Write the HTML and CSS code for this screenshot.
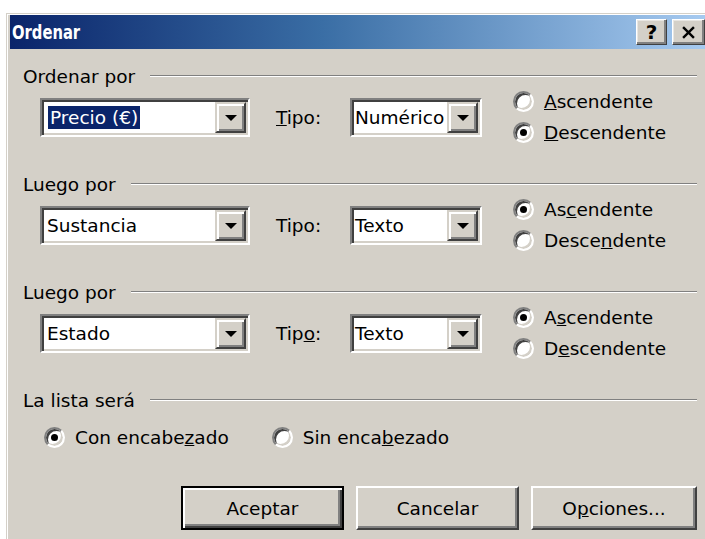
FILE: index.html
```html
<!DOCTYPE html>
<html lang="es">
<head>
<meta charset="utf-8">
<title>Ordenar</title>
<link rel="stylesheet" href="styles.css">
</head>
<body>
<div class="dialog">
  <div class="titlebar">
    <span class="title">Ordenar</span>
    <div class="caption">
      <span class="capbtn help">?</span>
      <span class="capbtn close"><svg viewBox="0 0 12 12" width="13" height="13"><path d="M1 1 L11 11 M11 1 L1 11" stroke="#000" stroke-width="2.2" fill="none"/></svg></span>
    </div>
  </div>

  <div class="content">
    <section class="group">
      <div class="legend"><span>Ordenar por</span><span class="rule"></span></div>
      <div class="sortrow">
        <div class="combo field"><span class="value sel">Precio (€)</span><span class="drop"><i class="arrow"></i></span></div>
        <span class="tipo"><u>T</u>ipo:</span>
        <div class="combo type"><span class="value">Numérico</span><span class="drop"><i class="arrow"></i></span></div>
        <div class="radios">
          <div class="radio"><span class="circle"></span><span><u>A</u>scendente</span></div>
          <div class="radio"><span class="circle on"></span><span><u>D</u>escendente</span></div>
        </div>
      </div>
    </section>

    <section class="group">
      <div class="legend"><span>Luego por</span><span class="rule"></span></div>
      <div class="sortrow">
        <div class="combo field"><span class="value">Sustancia</span><span class="drop"><i class="arrow"></i></span></div>
        <span class="tipo">Tipo:</span>
        <div class="combo type"><span class="value">Texto</span><span class="drop"><i class="arrow"></i></span></div>
        <div class="radios">
          <div class="radio"><span class="circle on"></span><span>As<u>c</u>endente</span></div>
          <div class="radio"><span class="circle"></span><span>Desce<u>n</u>dente</span></div>
        </div>
      </div>
    </section>

    <section class="group">
      <div class="legend"><span>Luego por</span><span class="rule"></span></div>
      <div class="sortrow">
        <div class="combo field"><span class="value">Estado</span><span class="drop"><i class="arrow"></i></span></div>
        <span class="tipo">Tip<u>o</u>:</span>
        <div class="combo type"><span class="value">Texto</span><span class="drop"><i class="arrow"></i></span></div>
        <div class="radios">
          <div class="radio"><span class="circle on"></span><span>A<u>s</u>cendente</span></div>
          <div class="radio"><span class="circle"></span><span>D<u>e</u>scendente</span></div>
        </div>
      </div>
    </section>

    <section class="group last">
      <div class="legend"><span>La lista será</span><span class="rule"></span></div>
      <div class="listrow">
        <div class="radio"><span class="circle on"></span><span>Con encabe<u>z</u>ado</span></div>
        <div class="radio"><span class="circle"></span><span>Sin enca<u>b</u>ezado</span></div>
      </div>
    </section>

    <div class="buttons">
      <span class="btn default">Aceptar</span>
      <span class="btn">Cancelar</span>
      <span class="btn wide">O<u>p</u>ciones...</span>
    </div>
  </div>
</div>
</body>
</html>
```

FILE: styles.css
```css
* { box-sizing: border-box; }

html, body {
  margin: 0;
  background: #fff;
}

body {
  width: 705px;
  height: 539px;
  overflow: hidden;
  font-family: "DejaVu Sans", "Liberation Sans", sans-serif;
  font-size: 18.5px;
  color: #000;
}

/* window frame */
.dialog {
  margin: 13px 0 0 6px;
  width: 699px;
  height: 540px;
  background: #d4d0c8;
  border-top: 1px solid #d4d0c8;
  border-left: 1px solid #d4d0c8;
  padding: 1px 0 0 3px;
  box-shadow: inset 1px 1px 0 #fff;
}

.titlebar {
  height: 34px;
  display: flex;
  align-items: center;
  justify-content: space-between;
  padding-left: 2px;
  background: linear-gradient(to right, #0a246a 0%, #3a6ea5 45%, #a6caf0 100%);
}

.title {
  color: #fff;
  font-family: "DejaVu Sans Condensed", "DejaVu Sans", sans-serif;
  font-weight: bold;
  font-size: 20px;
  transform: scaleX(0.82);
  transform-origin: left center;
}

.caption {
  display: flex;
  gap: 5px;
}

.capbtn {
  width: 31px;
  height: 26px;
  display: flex;
  align-items: center;
  justify-content: center;
  background: #d4d0c8;
  border: 1px solid;
  border-color: #fff #404040 #404040 #fff;
  box-shadow: inset -2px -2px 0 #808080, inset 1px 1px 0 #e8e6e2;
}

.capbtn.close { width: 33px; }

.help {
  font-family: "DejaVu Sans", sans-serif;
  font-weight: bold;
  font-size: 20px;
  line-height: 1;
}

.content {
  padding: 17px 8px 0 13px;
}

/* group heading with etched rule */
.legend {
  display: flex;
  align-items: center;
  height: 20px;
}

.rule {
  flex: 1;
  height: 2px;
  margin-left: 15px;
  border-top: 1px solid #808080;
  border-bottom: 1px solid #fff;
}

.group + .group { margin-top: 26px; }

.sortrow {
  display: flex;
  align-items: center;
  height: 62px;
  padding-left: 17px;
}

/* combo box */
.combo {
  height: 39px;
  display: flex;
  align-items: stretch;
  justify-content: space-between;
  background: #fff;
  border: 2px solid;
  border-color: #808080 #fff #fff #808080;
  box-shadow: inset 2px 2px 0 #404040, inset -2px -2px 0 #d4d0c8;
  padding: 2px;
}

.combo.field { width: 210px; }
.combo.type { width: 132px; }

.value {
  align-self: center;
  padding: 1px 2px;
  margin-left: 1px;
  white-space: nowrap;
}

.combo.type .value { margin-left: -1px; }

.value.sel {
  margin-left: 4px;
  background: #0a246a;
  color: #fff;
}

.drop {
  width: 31px;
  display: flex;
  align-items: center;
  justify-content: center;
  background: #d4d0c8;
  border: 2px solid;
  border-color: #d4d0c8 #404040 #404040 #d4d0c8;
  box-shadow: inset 2px 2px 0 #fff, inset -2px -2px 0 #808080;
}

.arrow {
  width: 0;
  height: 0;
  border-left: 6px solid transparent;
  border-right: 6px solid transparent;
  border-top: 6px solid #000;
  margin-top: 2px;
}

.tipo {
  width: 74px;
  margin-left: 26px;
}

.radios {
  margin-left: 31px;
  display: flex;
  flex-direction: column;
}

.radio {
  display: flex;
  align-items: center;
  gap: 10px;
  height: 31px;
  white-space: nowrap;
}

.circle {
  width: 21px;
  height: 21px;
  flex: none;
  border-radius: 50%;
  background: #fff;
  border: 2px solid;
  border-color: #808080 #fff #fff #808080;
  box-shadow: inset 2px 2px 0 #404040, inset -2px -2px 0 #d4d0c8;
  display: flex;
  align-items: center;
  justify-content: center;
}

.circle.on::after {
  content: "";
  width: 7px;
  height: 7px;
  border-radius: 50%;
  background: #000;
}

.listrow {
  display: flex;
  align-items: center;
  gap: 43px;
  height: 30px;
  margin-top: 12px;
  padding-left: 21px;
}

/* push buttons */
.buttons {
  display: flex;
  justify-content: flex-end;
  gap: 12px;
  margin-top: 34px;
}

.btn {
  width: 163px;
  height: 44px;
  display: flex;
  align-items: center;
  justify-content: center;
  background: #d4d0c8;
  border: 2px solid;
  border-color: #fff #404040 #404040 #fff;
  box-shadow: inset -2px -2px 0 #808080;
}

.btn.wide { width: 166px; }

.btn.default {
  border-color: #000;
  box-shadow: inset 2px 2px 0 #fff, inset -2px -2px 0 #404040, inset -4px -4px 0 #808080;
}
```
